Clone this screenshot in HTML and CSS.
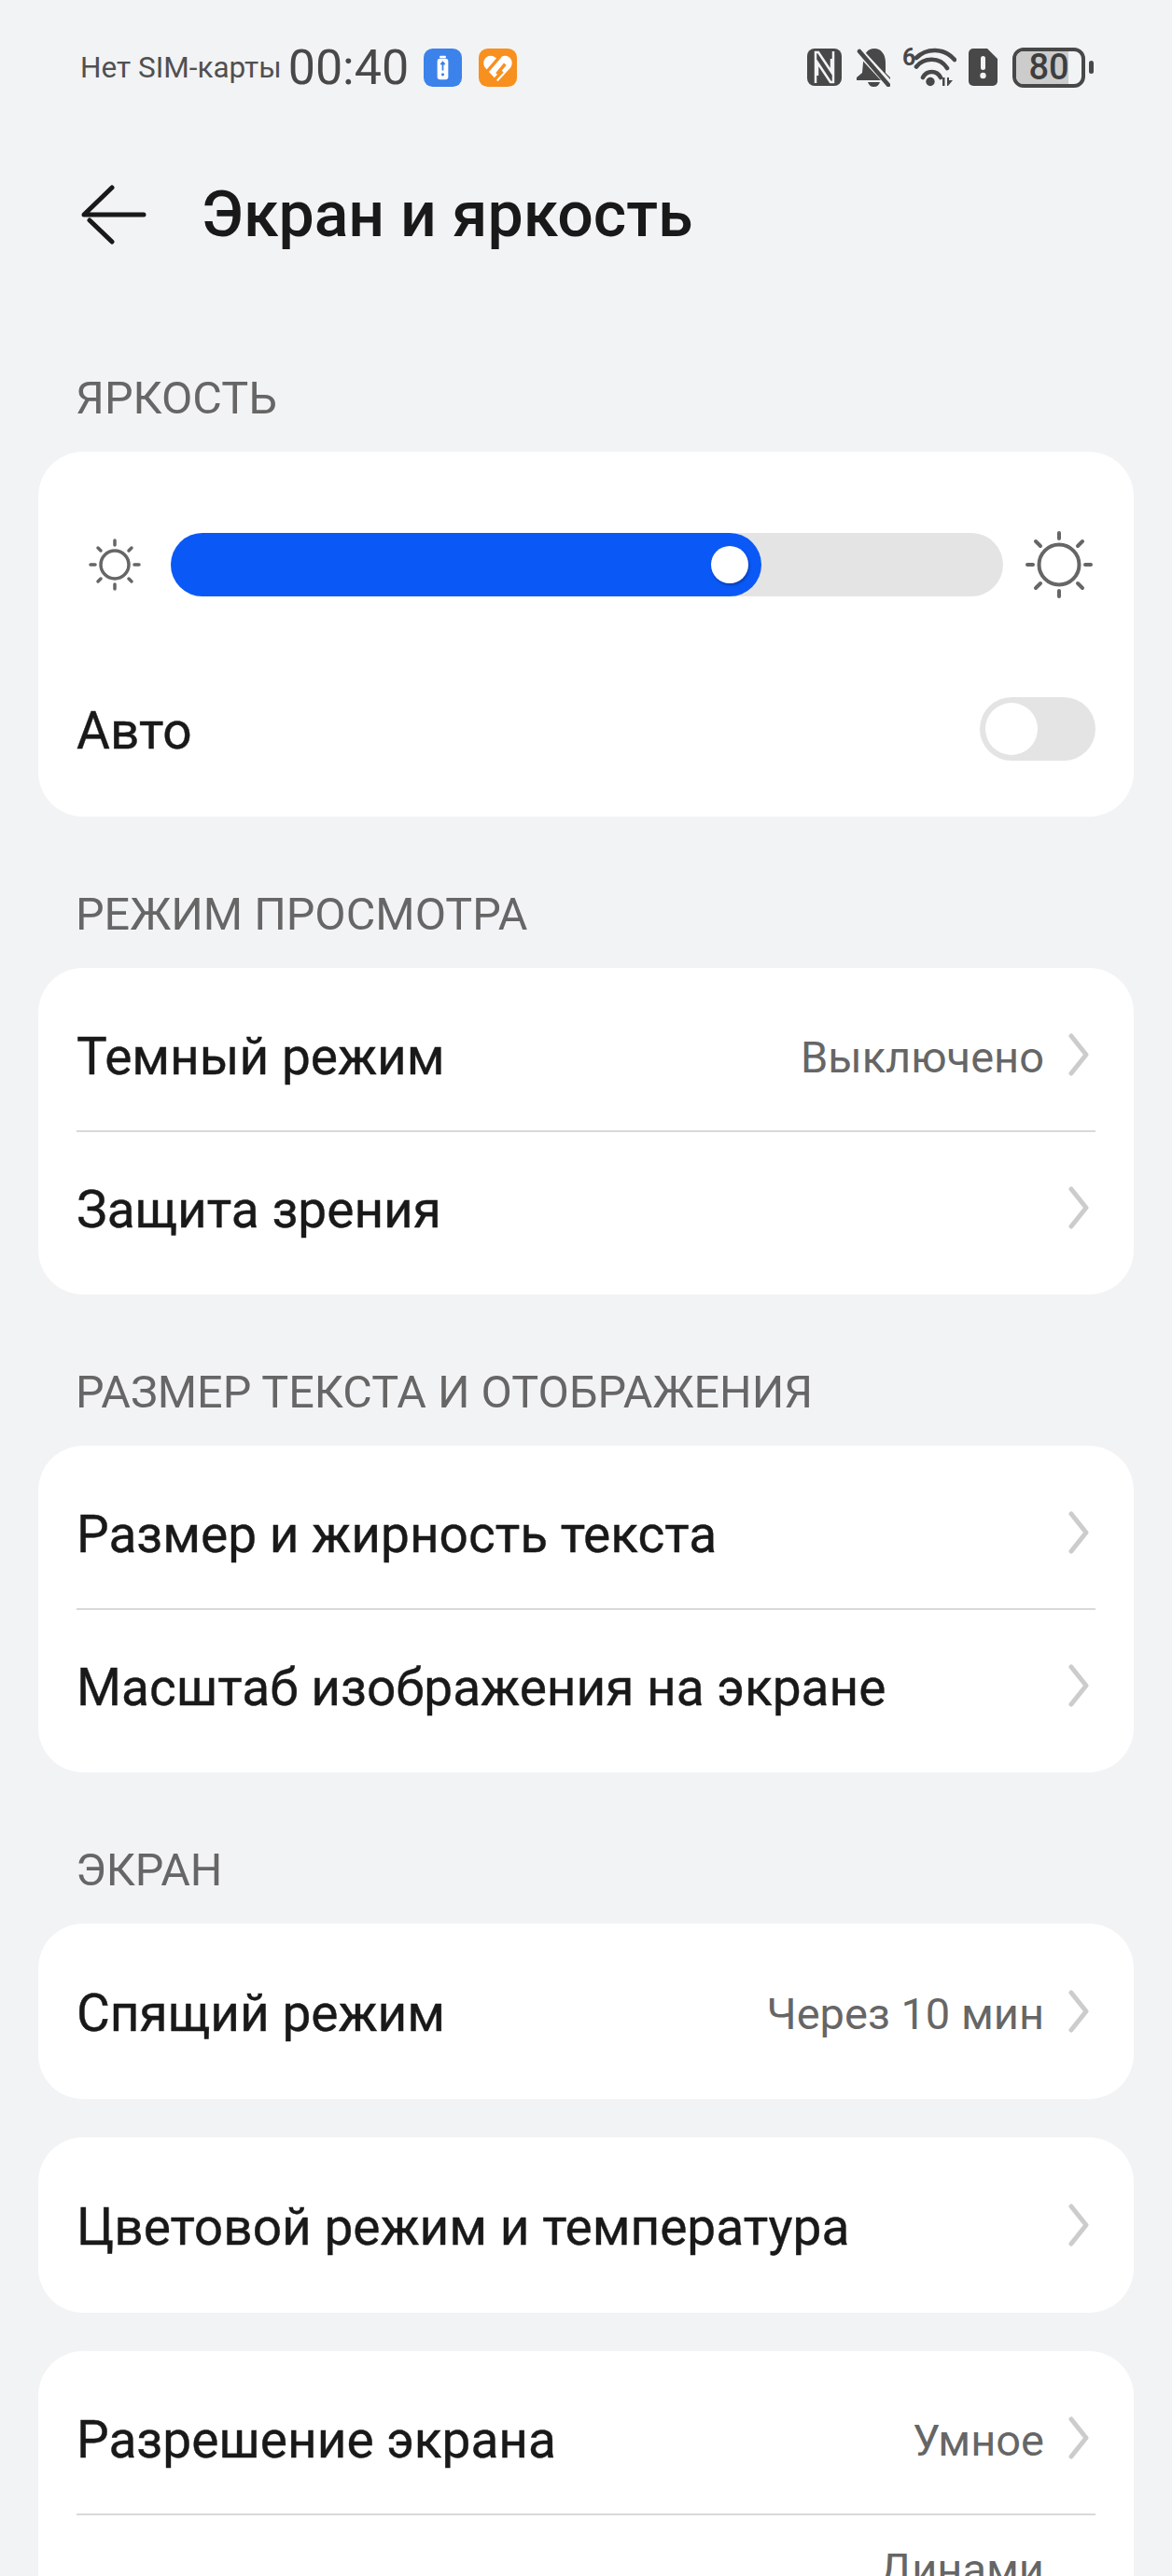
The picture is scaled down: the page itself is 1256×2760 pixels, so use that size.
FILE: index.html
```html
<!DOCTYPE html>
<html lang="ru">
<head>
    <meta charset="UTF-8">
    <meta name="viewport" content="width=device-width, initial-scale=1.0">
    <title>Экран и яркость</title>
    <link rel="stylesheet" href="styles.css">
</head>
<body>
    <div class="status-bar">
        <div class="status-left">
            <span class="sim">Нет SIM-карты</span>
            <span class="clock">00:40</span>
            <svg class="app-icon" viewBox="0 0 42 42">
                <rect width="42" height="42" rx="10" fill="#3b82ea"/>
                <rect x="15" y="11" width="12" height="23" rx="3" fill="#fff"/>
                <rect x="17.5" y="8" width="7" height="2.5" rx="1" fill="#fff"/>
                <path d="M21 15v9M18.800 17.500L21 15l2.200 2.500" stroke="#3b82ea" stroke-width="1.800" fill="none"/>
                <circle cx="21" cy="28.500" r="1.600" fill="#3b82ea"/>
            </svg>
            <svg class="app-icon app-icon-last" viewBox="0 0 42 42">
                <rect width="42" height="42" rx="10" fill="#f7901e"/>
                <path d="M21 36L7 21C3 15 7 8 13 8c3 0 6 2 8 4 2-2 5-4 8-4 6 0 10 7 6 13z" fill="#fff"/>
                <path d="M5 30L24 8M20 28l9-11M13 39L26 25" stroke="#f7901e" stroke-width="3.500" fill="none"/>
            </svg>
        </div>
        <div class="status-right">
            <svg class="st-nfc" viewBox="0 0 37 40">
                <rect width="37" height="40" rx="8" fill="#484848"/>
                <path d="M9 37V4h3l14 21V11M28 3v33h-3L11 15v14" stroke="#f2f3f5" stroke-width="2.500" fill="none"/>
            </svg>
            <svg class="st-bell" viewBox="0 0 36 41">
                <path d="M7 15C7 6 12 0 19 0s12 6 12 15v11l5 5v3H0v-3l6-5z" fill="#484848"/>
                <path d="M12 36h13c-1 3-3 5-6.500 5S13 39 12 36z" fill="#484848"/>
                <path d="M0 0l36 39" stroke="#f2f3f5" stroke-width="8"/>
                <path d="M3 3l31 36" stroke="#484848" stroke-width="4.500" stroke-linecap="round"/>
            </svg>
            <div class="wifi">
                <span class="wifi-six">6</span>
                <svg class="st-wifi" viewBox="0 0 58 42">
                    <path d="M15 11C26 0 45 0 56 13M15 20.500c8-10 25-11 33 1.500M22 32c4-8 15-8 19 0" stroke="#484848" stroke-width="4.600" stroke-linecap="round" fill="none"/>
                    <circle cx="30" cy="36.500" r="4.700" fill="#484848"/>
                    <path d="M39 36l4-3.500V41h2.500V32h-2z" fill="#484848"/>
                    <path d="M48 32h2v3h4l-5 6h-1z" fill="#484848"/>
                </svg>
            </div>
            <svg class="st-sim" viewBox="0 0 31 40">
                <path d="M5 0h15l11 11v24a5 5 0 0 1-5 5H5a5 5 0 0 1-5-5V5a5 5 0 0 1 5-5z" fill="#484848"/>
                <rect x="13" y="8" width="5" height="15" rx="2.500" fill="#f2f3f5"/>
                <circle cx="15.500" cy="29" r="3.200" fill="#f2f3f5"/>
            </svg>
            <div class="battery">
                <div class="battery-body">
                    <div class="battery-level"></div>
                    <span class="battery-num">80</span>
                </div>
                <div class="battery-tip"></div>
            </div>
        </div>
    </div>

    <div class="header">
        <svg class="back" viewBox="0 0 70 64">
            <path d="M67 32H3L33 3M9 38l24 23" stroke="#191919" stroke-width="5" stroke-linecap="round" stroke-linejoin="round" fill="none"/>
        </svg>
        <h1>Экран и яркость</h1>
    </div>

    <div class="section-title first">ЯРКОСТЬ</div>
    <div class="card brightness">
        <div class="slider-row">
            <svg class="sun-small" viewBox="0 0 56 56">
                <circle cx="28" cy="28" r="15" fill="none" stroke="#666" stroke-width="3.500"/>
                <path d="M28 2v5M28 49v5M2 28h5M49 28h5M10 10l3 3M43 43l3 3M10 46l3-3M43 13l3-3" stroke="#666" stroke-width="3.500" stroke-linecap="round"/>
            </svg>
            <div class="slider">
                <div class="slider-fill" style="width: 633px">
                    <div class="slider-thumb"></div>
                </div>
            </div>
            <svg class="sun-big" viewBox="0 0 72 72">
                <circle cx="36" cy="36" r="21.500" fill="none" stroke="#666" stroke-width="4"/>
                <path d="M36 2v6M36 64v6M2 36h6M64 36h6M11 11l5 5M56 56l5 5M11 61l5-5M56 16l5-5" stroke="#666" stroke-width="4" stroke-linecap="round"/>
            </svg>
        </div>
        <div class="auto-row">
            <span class="row-label">Авто</span>
            <div class="toggle"><div class="toggle-thumb"></div></div>
        </div>
    </div>

    <div class="section-title">РЕЖИМ ПРОСМОТРА</div>
    <div class="card">
        <div class="row">
            <span class="row-label">Темный режим</span>
            <span class="row-value">Выключено</span>
            <svg class="chevron" viewBox="0 0 24 46"><path d="M4 3l16 20L4 43" fill="none" stroke="#ccc" stroke-width="5" stroke-linecap="round" stroke-linejoin="round"/></svg>
        </div>
        <div class="divider"></div>
        <div class="row">
            <span class="row-label">Защита зрения</span>
            <svg class="chevron" viewBox="0 0 24 46"><path d="M4 3l16 20L4 43" fill="none" stroke="#ccc" stroke-width="5" stroke-linecap="round" stroke-linejoin="round"/></svg>
        </div>
    </div>

    <div class="section-title">РАЗМЕР ТЕКСТА И ОТОБРАЖЕНИЯ</div>
    <div class="card">
        <div class="row">
            <span class="row-label">Размер и жирность текста</span>
            <svg class="chevron" viewBox="0 0 24 46"><path d="M4 3l16 20L4 43" fill="none" stroke="#ccc" stroke-width="5" stroke-linecap="round" stroke-linejoin="round"/></svg>
        </div>
        <div class="divider"></div>
        <div class="row">
            <span class="row-label">Масштаб изображения на экране</span>
            <svg class="chevron" viewBox="0 0 24 46"><path d="M4 3l16 20L4 43" fill="none" stroke="#ccc" stroke-width="5" stroke-linecap="round" stroke-linejoin="round"/></svg>
        </div>
    </div>

    <div class="section-title">ЭКРАН</div>
    <div class="card single">
        <div class="row">
            <span class="row-label">Спящий режим</span>
            <span class="row-value">Через 10 мин</span>
            <svg class="chevron" viewBox="0 0 24 46"><path d="M4 3l16 20L4 43" fill="none" stroke="#ccc" stroke-width="5" stroke-linecap="round" stroke-linejoin="round"/></svg>
        </div>
    </div>
    <div class="card single">
        <div class="row">
            <span class="row-label">Цветовой режим и температура</span>
            <svg class="chevron" viewBox="0 0 24 46"><path d="M4 3l16 20L4 43" fill="none" stroke="#ccc" stroke-width="5" stroke-linecap="round" stroke-linejoin="round"/></svg>
        </div>
    </div>
    <div class="card">
        <div class="row">
            <span class="row-label">Разрешение экрана</span>
            <span class="row-value">Умное</span>
            <svg class="chevron" viewBox="0 0 24 46"><path d="M4 3l16 20L4 43" fill="none" stroke="#ccc" stroke-width="5" stroke-linecap="round" stroke-linejoin="round"/></svg>
        </div>
        <div class="divider"></div>
        <div class="row-cut">
            <span class="row-value">Динами</span>
        </div>
    </div>
</body>
</html>
```

FILE: styles.css
```css
html, body {
    height: 100%;
    overflow: hidden;
}
body {
    margin: 0;
    background-color: #f2f3f5;
    font-family: Roboto, "Noto Sans", sans-serif;
    color: #191919;
}
.status-bar {
    height: 72px;
    padding: 36px 84px 0 86px;
    display: flex;
    justify-content: space-between;
    align-items: center;
}
.status-left, .status-right {
    display: flex;
    align-items: center;
}
.sim {
    font-size: 31.5px;
    color: #505050;
    margin-right: 7px;
}
.clock {
    font-size: 52px;
    color: #484848;
    margin-right: 16px;
}
.app-icon {
    width: 41px;
    height: 41px;
    margin-right: 18px;
}
.app-icon-last {
    margin-right: 0;
}
.st-nfc {
    width: 37px;
    height: 40px;
    margin-right: 16px;
}
.st-bell {
    width: 36px;
    height: 41px;
    margin-right: 13px;
}
.wifi {
    position: relative;
    width: 58px;
    height: 42px;
    margin-right: 13px;
}
.st-wifi {
    display: block;
    width: 58px;
    height: 42px;
}
.wifi-six {
    position: absolute;
    left: 0;
    top: -2px;
    font-size: 25px;
    line-height: 25px;
    font-weight: bold;
    color: #484848;
}
.st-sim {
    width: 31px;
    height: 40px;
    margin-right: 16px;
}
.battery {
    display: flex;
    align-items: center;
}
.battery-body {
    position: relative;
    width: 78px;
    height: 43px;
    box-sizing: border-box;
    border: 4px solid #484848;
    border-radius: 12px;
    display: flex;
    align-items: center;
    justify-content: center;
    overflow: hidden;
}
.battery-level {
    position: absolute;
    left: 0;
    top: 0;
    bottom: 0;
    width: 80%;
    background-color: #cccccc;
}
.battery-num {
    position: relative;
    font-size: 38px;
    font-weight: 500;
    line-height: 35px;
    color: #3e3e3e;
}
.battery-tip {
    width: 5px;
    height: 14px;
    background-color: #484848;
    border-radius: 3px;
    margin-left: 4px;
}

.header {
    height: 120px;
    margin-top: 62px;
    padding-left: 87px;
    display: flex;
    align-items: center;
}
.back {
    width: 70px;
    height: 64px;
    margin-right: 59px;
}
h1 {
    margin: 0;
    font-size: 68px;
    font-weight: 500;
}

.section-title {
    height: 60px;
    margin-top: 74px;
    margin-bottom: 28px;
    padding-left: 81px;
    font-size: 48.5px;
    line-height: 62px;
    color: #666;
}
.section-title.first {
    margin-top: 106px;
}
.card {
    margin: 0 41px;
    background-color: #fff;
    border-radius: 48px;
    padding: 12px 41px;
}
.card.single {
    margin-bottom: 41px;
}
.card.single .row {
    height: 164px;
}
.brightness {
    height: 391px;
    box-sizing: border-box;
    padding-top: 0;
    padding-bottom: 0;
}
.slider-row {
    display: flex;
    align-items: center;
    height: 68px;
    padding-top: 87px;
}
.sun-small {
    width: 56px;
    height: 56px;
    margin-left: 13px;
    margin-right: 32px;
}
.slider {
    width: 892px;
    height: 68px;
    background-color: #e4e4e4;
    border-radius: 34px;
    margin-right: 24px;
}
.slider-fill {
    height: 68px;
    background-color: #0a59f7;
    border-radius: 34px;
    position: relative;
}
.slider-thumb {
    position: absolute;
    right: 14px;
    top: 14px;
    width: 40px;
    height: 40px;
    border-radius: 50%;
    background-color: #fff;
    box-shadow: 1px 2px 3px rgba(0, 0, 0, 0.3);
}
.sun-big {
    width: 72px;
    height: 72px;
}
.auto-row {
    display: flex;
    align-items: center;
    justify-content: space-between;
    margin-top: 108px;
    height: 68px;
}
.toggle {
    width: 124px;
    height: 68px;
    background-color: #e4e4e4;
    border-radius: 34px;
    padding: 6px;
    box-sizing: border-box;
}
.toggle-thumb {
    width: 56px;
    height: 56px;
    border-radius: 50%;
    background-color: #fff;
}
.row {
    display: flex;
    align-items: center;
    height: 162px;
}
.row-label {
    font-size: 55px;
    flex: 1;
    padding-top: 4px;
    -webkit-text-stroke: 0.4px #191919;
}
.row-value {
    font-size: 47px;
    color: #666;
    padding-top: 4px;
}
.chevron {
    width: 24px;
    height: 46px;
    margin-left: 25px;
    margin-right: 6px;
}
.divider {
    height: 2px;
    background-color: #d9d9d9;
}
.row-cut {
    text-align: right;
    padding: 30px 55px 0 0;
    height: 200px;
}
```
